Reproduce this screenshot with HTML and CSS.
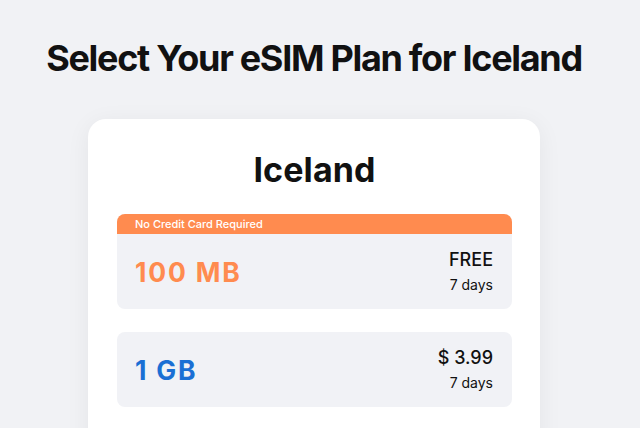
FILE: index.html
```html
<!DOCTYPE html>
<html lang="en">
<head>
    <meta charset="UTF-8">
    <meta name="viewport" content="width=device-width, initial-scale=1.0">
    <title>Select Your eSIM Plan for Iceland</title>
    <link rel="stylesheet" href="styles.css">
</head>
<body>
    <h1 class="page-title">Select Your eSIM Plan for Iceland</h1>

    <div class="card">
        <h2 class="country">Iceland</h2>

        <!-- free plan -->
        <div class="plan plan-free">
            <div class="plan-badge">No Credit Card Required</div>
            <div class="plan-body">
                <span class="plan-data orange">100 MB</span>
                <div class="plan-info">
                    <span class="plan-price">FREE</span>
                    <span class="plan-days">7 days</span>
                </div>
            </div>
        </div>

        <!-- paid plan -->
        <div class="plan">
            <div class="plan-body">
                <span class="plan-data blue">1 GB</span>
                <div class="plan-info">
                    <span class="plan-price">$ 3.99</span>
                    <span class="plan-days">7 days</span>
                </div>
            </div>
        </div>
    </div>
</body>
</html>
```

FILE: styles.css
```css
body {
    margin: 0;
    background-color: #f1f2f5;
    font-family: 'Inter', 'Noto Sans', sans-serif;
    color: #111;
    display: flex;
    flex-direction: column;
    align-items: center;
    padding: 34px 12px 0 0;
}

.page-title {
    margin: 0 0 37px 0;
    font-size: 36px;
    font-weight: 700;
    letter-spacing: -1.3px;
    text-align: center;
    line-height: 48px;
}

.card {
    width: 452px;
    background-color: white;
    border-radius: 18px;
    padding: 28px 28px 28px 29px;
    box-sizing: border-box;
    box-shadow: 0 4px 24px rgba(0, 0, 0, 0.06);
}

.country {
    margin: 0 0 21px 0;
    font-size: 34px;
    font-weight: 700;
    letter-spacing: 0.1px;
    text-align: center;
    line-height: 46px;
}

.plan {
    background-color: #f1f2f6;
    border-radius: 8px;
    margin-bottom: 23px;
    overflow: hidden;
}

.plan-badge {
    background-color: #ff8b4f;
    color: white;
    font-size: 11px;
    font-weight: 500;
    line-height: 20px;
    height: 20px;
    padding-left: 18px;
}

.plan-body {
    height: 75px;
    display: flex;
    align-items: center;
    justify-content: space-between;
    padding: 0 19px 0 18px;
}

.plan-data {
    font-size: 26.5px;
    font-weight: 700;
    letter-spacing: 1.8px;
}

.orange {
    color: #ff8b4f;
}

.blue {
    color: #1a6fd4;
}

.plan-info {
    display: flex;
    flex-direction: column;
    align-items: flex-end;
    gap: 6px;
}

.plan-price {
    font-size: 18px;
    font-weight: 500;
    line-height: 20px;
}

.plan-days {
    font-size: 14px;
    line-height: 18px;
}
```
